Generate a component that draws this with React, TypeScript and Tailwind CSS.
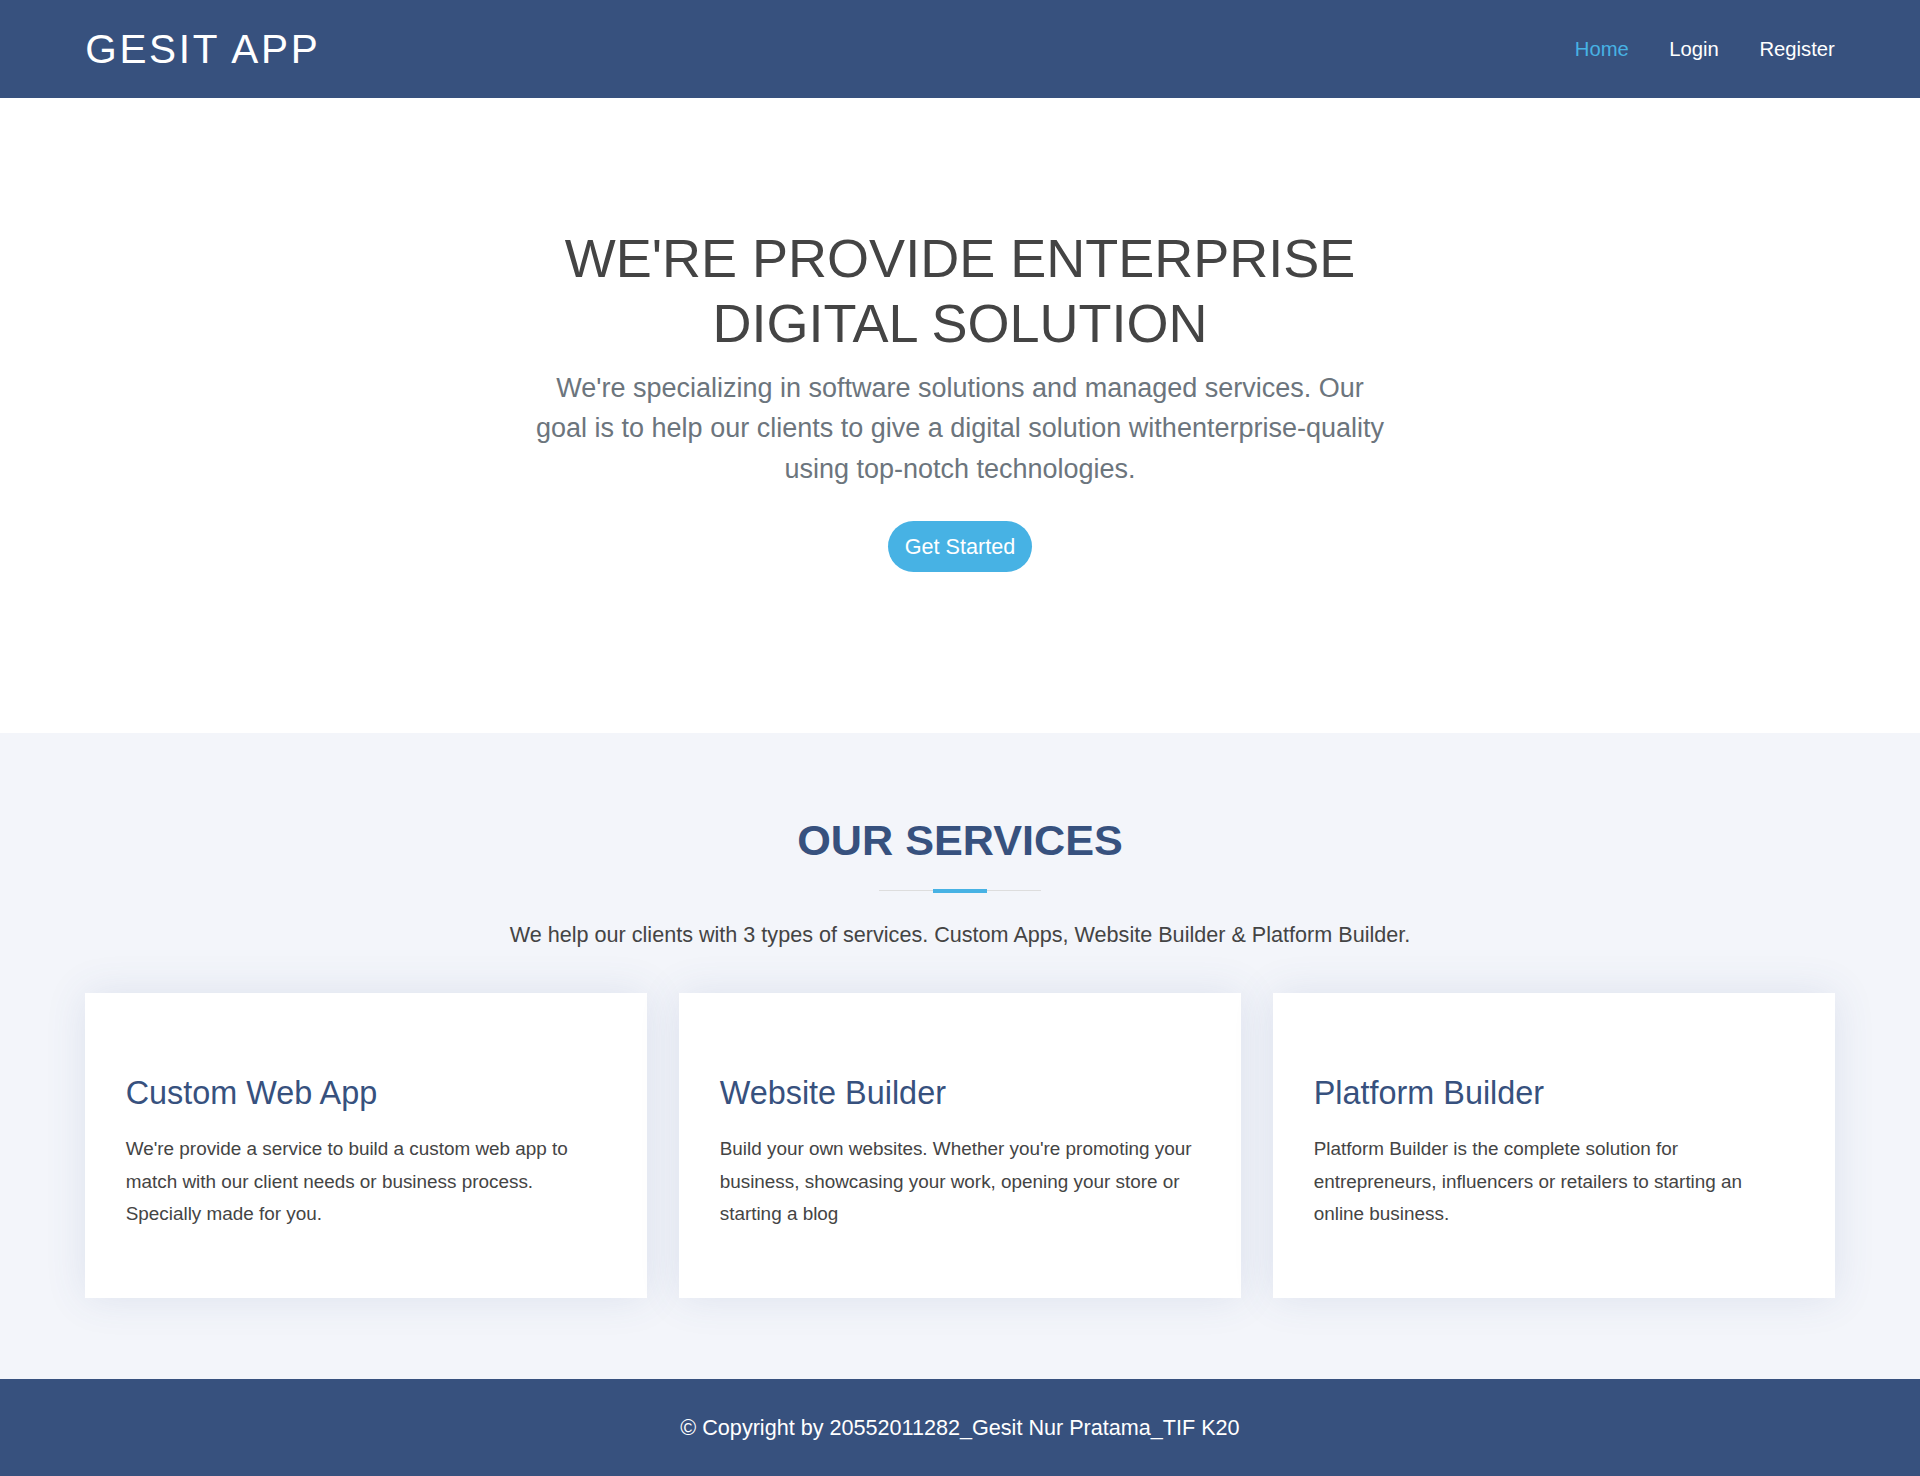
import React from "react";

const services = [
  {
    title: "Custom Web App",
    body: "We're provide a service to build a custom web app to match with our client needs or business process. Specially made for you.",
  },
  {
    title: "Website Builder",
    body: "Build your own websites. Whether you're promoting your business, showcasing your work, opening your store or starting a blog",
  },
  {
    title: "Platform Builder",
    body: "Platform Builder is the complete solution for entrepreneurs, influencers or retailers to starting an online business.",
  },
];

export default function App() {
  return (
    <div className="min-h-[1476px] bg-white font-['Liberation_Sans',Arial,sans-serif] text-[#444444]">
      <header className="h-[98px] bg-[#37517e]">
        <div className="mx-auto flex h-full w-[1749.6px] items-center justify-between">
          <div className="text-[40.5px] leading-none uppercase tracking-[2.7px] text-white">
            GESIT APP
          </div>
          <nav className="flex items-center gap-[40.5px] text-[20.25px] leading-none">
            <a className="text-[#47b2e4]">Home</a>
            <a className="text-white">Login</a>
            <a className="text-white">Register</a>
          </nav>
        </div>
      </header>

      <section className="flex flex-col items-center pt-[128.3px] pb-[161px] text-center">
        <div className="w-[856px]">
          <h1 className="text-[54px] leading-[1.2] font-normal text-[#444444]">
            WE'RE PROVIDE ENTERPRISE DIGITAL SOLUTION
          </h1>
          <p className="mt-[12px] text-[27px] leading-[1.5] text-[#6c757d]">
            We're specializing in software solutions and managed services. Our goal is to help our clients to give a digital solution withenterprise-quality using top-notch technologies.
          </p>
        </div>
        <button className="mt-[31.5px] flex h-[51px] items-center rounded-full bg-[#47b2e4] px-[17px] text-[21.6px] leading-none text-white">
          Get Started
        </button>
      </section>

      <section className="bg-[#f3f5fa] pt-[82px] pb-[81px]">
        <div className="mx-auto w-[1749.6px]">
          <h2 className="text-center text-[43.2px] leading-[1.2] font-bold uppercase text-[#37517e]">
            Our Services
          </h2>
          <div className="relative mx-auto mt-[22px] flex h-[4px] w-[162px] items-center justify-center">
            <div className="h-px w-full bg-[#dddddd]" />
            <div className="absolute left-[54px] top-0 h-[4px] w-[54px] bg-[#47b2e4]" />
          </div>
          <p className="mt-[26px] text-center text-[21.6px] leading-[1.5] text-[#444444]">
            We help our clients with 3 types of services. Custom Apps, Website Builder &amp; Platform Builder.
          </p>
          <div className="mt-[42px] grid grid-cols-3 gap-[32.4px]">
            {services.map((s) => (
              <div
                key={s.title}
                className="bg-white px-[40.5px] pt-[81px] pb-[68px] shadow-[0_0_39px_0_rgba(68,88,144,0.12)]"
              >
                <h4 className="text-[32.4px] leading-[1.2] font-normal text-[#37517e]">
                  {s.title}
                </h4>
                <p className="mt-[20.25px] text-[18.9px] leading-[32.4px] text-[#444444]">
                  {s.body}
                </p>
              </div>
            ))}
          </div>
        </div>
      </section>

      <footer className="flex h-[97.2px] items-center justify-center bg-[#37517e] text-[21.6px] text-white">
        © Copyright by 20552011282_Gesit Nur Pratama_TIF K20
      </footer>
    </div>
  );
}
